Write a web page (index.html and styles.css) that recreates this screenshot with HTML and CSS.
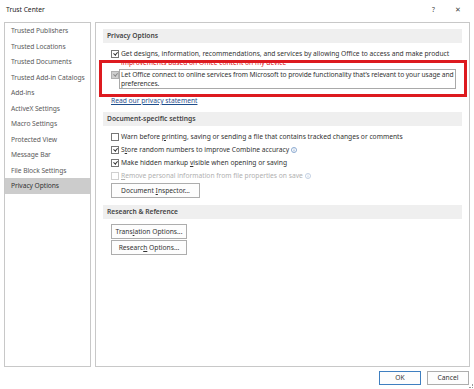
FILE: index.html
```html
<!DOCTYPE html>
<html lang="en">
<head>
    <meta charset="UTF-8">
    <meta name="viewport" content="width=device-width, initial-scale=1.0">
    <title>Trust Center</title>
    <link rel="stylesheet" href="styles.css">
</head>
<body>
    <div class="dialog">
        <div class="titlebar">
            <span class="title">Trust Center</span>
            <span class="controls">
                <span class="help">?</span>
                <span class="close">&#x2715;</span>
            </span>
        </div>

        <div class="main">
            <ul class="nav">
                <li>Trusted Publishers</li>
                <li>Trusted Locations</li>
                <li>Trusted Documents</li>
                <li>Trusted Add-in Catalogs</li>
                <li>Add-ins</li>
                <li>ActiveX Settings</li>
                <li>Macro Settings</li>
                <li>Protected View</li>
                <li>Message Bar</li>
                <li>File Block Settings</li>
                <li class="selected">Privacy Options</li>
            </ul>

            <div class="page">
                <div class="section-head">Privacy Options</div>
                <div class="options privacy">
                    <div class="opt">
                        <span class="box checked"></span>
                        <span class="txt">Get designs, information, recommendations, and services by allowing Office to access and make product<br><span class="red">improvements based on Office content on my device</span></span>
                    </div>
                    <div class="opt">
                        <span class="box checked disabled"></span>
                        <span class="txt focus">Let Office connect to online services from Microsoft to provide functionality that&#8217;s relevant to your usage and<br>preferences.</span>
                    </div>
                    <a class="link" href="#">Read our privacy statement</a>
                </div>

                <div class="section-head">Document-specific settings</div>
                <div class="options">
                    <div class="opt">
                        <span class="box"></span>
                        <span class="txt">Warn before <u>p</u>rinting, saving or sending a file that contains tracked changes or comments</span>
                    </div>
                    <div class="opt">
                        <span class="box checked"></span>
                        <span class="txt">S<u>t</u>ore random numbers to improve Combine accuracy <svg class="info" viewBox="0 0 8 8"><circle cx="4" cy="4" r="3.4"/><path d="M4 3.4v2.6M4 2v0.8"/></svg></span>
                    </div>
                    <div class="opt">
                        <span class="box checked"></span>
                        <span class="txt">Make hidden markup <u>v</u>isible when opening or saving</span>
                    </div>
                    <div class="opt off">
                        <span class="box"></span>
                        <span class="txt"><u>R</u>emove personal information from file properties on save <svg class="info" viewBox="0 0 8 8"><circle cx="4" cy="4" r="3.4"/><path d="M4 3.4v2.6M4 2v0.8"/></svg></span>
                    </div>
                    <button class="btn inspector">Document <u>I</u>nspector...</button>
                </div>

                <div class="section-head">Research &amp; Reference</div>
                <div class="options research">
                    <button class="btn wide">Trans<u>l</u>ation Options...</button>
                    <button class="btn wide">Researc<u>h</u> Options...</button>
                </div>

                <div class="highlight"></div>
            </div>
        </div>

        <div class="footer">
            <button class="btn ok">OK</button>
            <button class="btn">Cancel</button>
        </div>
        <span class="grip"></span>
    </div>
</body>
</html>
```

FILE: styles.css
```css
body {
    margin: 0;
    background: #fff;
    font-family: "Noto Sans", "Open Sans", sans-serif;
    font-size: 6.7px;
    color: #333;
}
.dialog {
    position: relative;
    width: 474px;
    height: 389px;
}
.titlebar {
    height: 22px;
    display: flex;
    align-items: center;
    justify-content: space-between;
    padding: 0 13px 4px 6px;
    box-sizing: border-box;
    color: #222;
}
.controls {
    display: flex;
    gap: 20px;
    color: #444;
}
.main {
    display: flex;
    gap: 4px;
    height: 345px;
    padding: 0 4px;
}
.nav {
    list-style: none;
    margin: 0;
    padding: 0;
    width: 85px;
    border: 1px solid #c8c8c8;
    color: #5a5a5a;
}
.nav li {
    height: 15.5px;
    line-height: 15.5px;
    padding-left: 6px;
    white-space: nowrap;
    letter-spacing: -0.06px;
}
.nav li.selected {
    background: #cccccc;
    color: #333;
}
.page {
    position: relative;
    width: 359px;
    border: 1px solid #c8c8c8;
    padding: 6px 7px 0 7px;
}
.section-head {
    height: 14px;
    line-height: 14px;
    padding-left: 4px;
    background: #efefef;
    font-weight: 600;
    color: #444;
}
.options {
    display: flex;
    flex-direction: column;
    align-items: flex-start;
    gap: 2px;
    padding: 5px 0 7px 8px;
}
.options.privacy {
    gap: 1px;
}
.opt {
    display: flex;
    align-items: flex-start;
    line-height: 9px;
    white-space: nowrap;
}
.box {
    width: 6px;
    height: 6px;
    margin-top: 2px;
    border: 1px solid #777;
    background: #fff;
    position: relative;
}
.box.checked::after {
    content: "";
    position: absolute;
    left: 1.6px;
    top: 0.2px;
    width: 1.6px;
    height: 3.4px;
    border: solid #333;
    border-width: 0 1px 1px 0;
    transform: rotate(40deg);
}
.box.disabled {
    background: #cfcfcf;
    border-color: #b0b0b0;
}
.box.disabled::after {
    border-color: #8a8a8a;
}
.txt {
    border: 1px solid transparent;
    padding: 0 1px 0 1px;
}
.txt.focus {
    border-color: #a9a9a9;
    letter-spacing: -0.07px;
}
.red {
    color: #d11;
}
.off {
    color: #b0b0b0;
}
.off .box {
    border-color: #d0d0d0;
}
.info {
    width: 6px;
    height: 6px;
    vertical-align: -0.5px;
    fill: none;
    stroke: #4a78b5;
    stroke-width: 0.8;
}
.off .info {
    stroke: #9fb5d3;
}
.link {
    margin-top: 6px;
    line-height: 9px;
    color: #1f4e8c;
    text-decoration: underline;
}
.btn {
    font-family: inherit;
    font-size: 6.7px;
    color: #333;
    height: 15px;
    padding: 0 9px;
    background: #fdfdfd;
    border: 1px solid #adadad;
    border-radius: 0;
    line-height: 13px;
}
.btn.wide {
    width: 76px;
    padding: 0;
}
.research {
    padding-top: 5px;
    gap: 1px;
}
.highlight {
    position: absolute;
    left: 3px;
    top: 37px;
    width: 362px;
    height: 31px;
    border: 3px solid #dd1a1f;
}
.footer {
    display: flex;
    justify-content: flex-end;
    gap: 6px;
    padding: 4px 5px 0 0;
}
.footer .btn {
    width: 42px;
    height: 14px;
    padding: 0;
    line-height: 12px;
}
.btn.ok {
    border-color: #3f7fc0;
}
.grip {
    position: absolute;
    right: 1px;
    bottom: 1px;
    width: 3px;
    height: 3px;
    border-right: 1px dotted #999;
    border-bottom: 1px dotted #999;
}
```
